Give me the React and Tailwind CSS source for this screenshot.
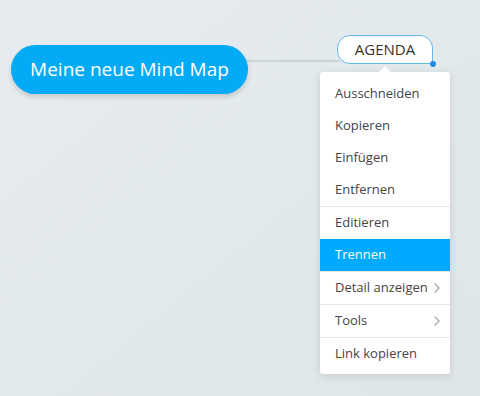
import { ChevronRight } from "lucide-react";

const groups = [
  [{ label: "Ausschneiden" }, { label: "Kopieren" }, { label: "Einfügen" }, { label: "Entfernen" }],
  [{ label: "Editieren" }, { label: "Trennen", active: true }],
  [{ label: "Detail anzeigen", sub: true }],
  [{ label: "Tools", sub: true }],
  [{ label: "Link kopieren" }],
];

function MenuRow({ item }) {
  return (
    <div
      className={`flex items-center justify-between h-[32px] pl-[15px] pr-[5px] text-[13px] ${
        item.active ? "bg-[#00aaff] text-white" : "text-[#444]"
      }`}
    >
      <span>{item.label}</span>
      {item.sub && <ChevronRight size={16} strokeWidth={2.5} className="text-[#b3b3b3]" />}
    </div>
  );
}

export default function App() {
  return (
    <div
      className="relative w-[480px] h-[396px] overflow-hidden bg-gradient-to-br from-[#e6ecef] to-[#dfe6ea]"
      style={{ fontFamily: '"Open Sans", "Noto Sans", sans-serif' }}
    >
      {/* connector line */}
      <div className="absolute left-[240px] top-[60px] w-[100px] h-[2px] bg-[#cbd4d9]" />

      {/* root node */}
      <div className="absolute left-[11px] top-[45px] w-[237px] h-[49px] rounded-full bg-[#03aaf6] shadow-[0_3px_5px_rgba(0,0,0,0.15)] flex items-center justify-center text-white text-[19px]">
        Meine neue Mind Map
      </div>

      {/* child node */}
      <div className="absolute left-[337px] top-[35px] w-[96px] h-[29px] bg-white border border-[#5fbce8] rounded-tl-[13px] rounded-tr-[13px] rounded-bl-[13px] flex items-center justify-center text-[15px] text-[#333]">
        AGENDA
        <span className="absolute -right-[4px] -bottom-[4px] w-[6px] h-[6px] rounded-full bg-[#1e8be0]" />
      </div>

      {/* context menu */}
      <div className="absolute left-[320px] top-[72px] w-[130px] bg-white rounded-[3px] shadow-[0_2px_8px_rgba(0,0,0,0.12)] pt-[6px] pb-[4px]">
        <div className="absolute -top-[6px] left-[59px] w-0 h-0 border-l-[6px] border-r-[6px] border-b-[6px] border-l-transparent border-r-transparent border-b-white" />
        {groups.map((group, gi) => (
          <div key={gi} className={gi > 0 ? "border-t border-[#e6e6e6]" : ""}>
            {group.map((item) => (
              <MenuRow key={item.label} item={item} />
            ))}
          </div>
        ))}
      </div>
    </div>
  );
}
